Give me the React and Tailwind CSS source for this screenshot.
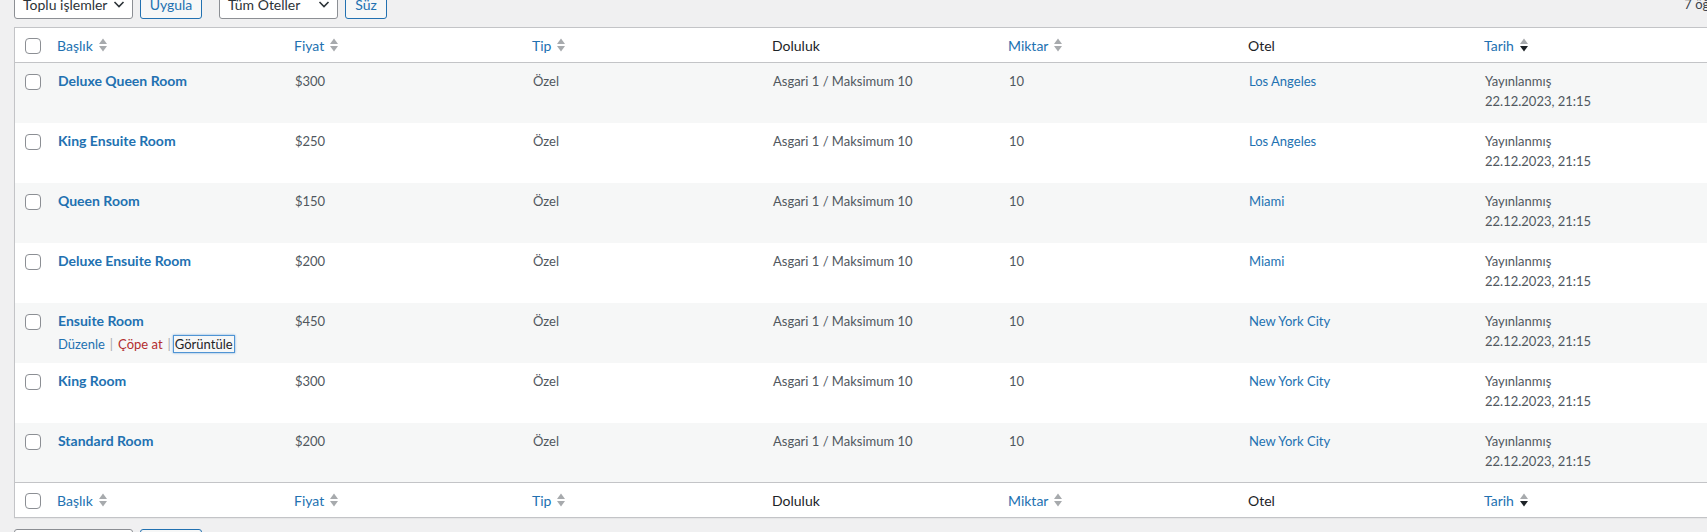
const rooms = [
  { title: 'Deluxe Queen Room', price: '$300', hotel: 'Los Angeles' },
  { title: 'King Ensuite Room', price: '$250', hotel: 'Los Angeles' },
  { title: 'Queen Room', price: '$150', hotel: 'Miami' },
  { title: 'Deluxe Ensuite Room', price: '$200', hotel: 'Miami' },
  { title: 'Ensuite Room', price: '$450', hotel: 'New York City', actions: true },
  { title: 'King Room', price: '$300', hotel: 'New York City' },
  { title: 'Standard Room', price: '$200', hotel: 'New York City' },
]

const columns = [
  { label: 'Başlık', sort: 'both' },
  { label: 'Fiyat', sort: 'both' },
  { label: 'Tip', sort: 'both' },
  { label: 'Doluluk' },
  { label: 'Miktar', sort: 'both' },
  { label: 'Otel' },
  { label: 'Tarih', sort: 'desc' },
]

const grid = 'grid grid-cols-[33px_237px_238px_240px_236px_240px_236px_240px]'

function SortIcon({ desc }) {
  return (
    <svg width="8" height="14" viewBox="0 0 8 14" className="ml-[6px] shrink-0">
      <polygon points="0,6 4,0.5 8,6" fill="#a7aaad" />
      <polygon points="0,8 4,13.5 8,8" fill={desc ? '#1d2327' : '#a7aaad'} />
    </svg>
  )
}

function Checkbox() {
  return <div className="w-4 h-4 rounded-[4px] border border-[#8c8f94] bg-white" />
}

function Chevron() {
  return (
    <svg width="12" height="12" viewBox="0 0 12 12" className="shrink-0">
      <path d="M1.5 4 L6 8.5 L10.5 4" fill="none" stroke="#2c3338" strokeWidth="1.6" />
    </svg>
  )
}

function HeadRow({ border }) {
  return (
    <div className={`${grid} h-[35px] bg-white ${border}`}>
      <div className="pl-[10px] pt-[10px]">
        <Checkbox />
      </div>
      {columns.map((c) => (
        <div key={c.label} className="pl-[9px] flex items-center text-[14px]">
          <span className={c.sort ? 'text-[#2271b1]' : 'text-[#1d2327]'}>{c.label}</span>
          {c.sort && <SortIcon desc={c.sort === 'desc'} />}
        </div>
      ))}
    </div>
  )
}

export default function App() {
  return (
    <div className="w-full h-[532px] overflow-hidden bg-[#f0f0f1] font-['Lato','Liberation_Sans',sans-serif] text-[13px] text-[#3c434a]">
      <div className="w-[1730px] px-[14px]">
        {/* top tablenav */}
        <div className="-mt-[11px] h-[30px] flex items-center">
          <div className="w-[119px] h-[30px] flex items-center justify-between pl-[8px] pr-[7px] bg-white border border-[#8c8f94] rounded-[3px] text-[14px] text-[#2c3338]">
            <span>Toplu işlemler</span>
            <Chevron />
          </div>
          <div className="ml-[7px] w-[62px] h-[30px] flex items-center justify-center bg-[#f6f7f7] border border-[#2271b1] rounded-[3px] text-[14px] text-[#2271b1]">
            Uygula
          </div>
          <div className="ml-[17px] w-[119px] h-[30px] flex items-center justify-between pl-[8px] pr-[7px] bg-white border border-[#8c8f94] rounded-[3px] text-[14px] text-[#2c3338]">
            <span>Tüm Oteller</span>
            <Chevron />
          </div>
          <div className="ml-[7px] w-[42px] h-[30px] flex items-center justify-center bg-[#f6f7f7] border border-[#2271b1] rounded-[3px] text-[14px] text-[#2271b1]">
            Süz
          </div>
          <div className="ml-auto pt-[2px] text-[#3c434a]">7 öğe</div>
        </div>

        {/* list table */}
        <div className="mt-[8px] border border-[#c3c4c7] bg-white shadow-[0_1px_1px_rgba(0,0,0,0.04)]">
          <HeadRow border="border-b border-[#c3c4c7]" />
          {rooms.map((r, i) => (
            <div
              key={r.title}
              className={`${grid} ${i === rooms.length - 1 ? 'h-[59px]' : 'h-[60px]'} leading-[20px] ${i % 2 === 0 ? 'bg-[#f6f7f7]' : 'bg-white'}`}
            >
              <div className="pl-[10px] pt-[11px]">
                <Checkbox />
              </div>
              <div className="pl-[10px] pt-[8px]">
                <div className="text-[14px] font-bold text-[#2271b1]">{r.title}</div>
                {r.actions && (
                  <div className="mt-[3px] flex items-center text-[13px]">
                    <span className="text-[#2271b1]">Düzenle</span>
                    <span className="mx-[5px] text-[#a7aaad]">|</span>
                    <span className="text-[#b32d2e]">Çöpe at</span>
                    <span className="ml-[5px] mr-[2px] text-[#a7aaad]">|</span>
                    <span className="h-[18px] px-[1px] flex items-center border border-[#4f94d4] shadow-[0_0_2px_rgba(79,148,212,0.8)] text-[#1d2327]">
                      Görüntüle
                    </span>
                  </div>
                )}
              </div>
              <div className="pl-[10px] pt-[8px] text-[#50575e]">{r.price}</div>
              <div className="pl-[10px] pt-[8px] text-[#50575e]">Özel</div>
              <div className="pl-[10px] pt-[8px] text-[#50575e]">Asgari 1 / Maksimum 10</div>
              <div className="pl-[10px] pt-[8px] text-[#50575e]">10</div>
              <div className="pl-[10px] pt-[8px] text-[#2271b1]">{r.hotel}</div>
              <div className="pl-[10px] pt-[8px] text-[#50575e]">
                <div>Yayınlanmış</div>
                <div>22.12.2023, 21:15</div>
              </div>
            </div>
          ))}
          <HeadRow border="border-t border-[#c3c4c7]" />
        </div>

        {/* bottom tablenav */}
        <div className="mt-[11px] h-[30px] flex items-center">
          <div className="w-[119px] h-[30px] bg-white border border-[#8c8f94] rounded-[3px]" />
          <div className="ml-[7px] w-[62px] h-[30px] bg-[#f6f7f7] border border-[#2271b1] rounded-[3px]" />
        </div>
      </div>
    </div>
  )
}
